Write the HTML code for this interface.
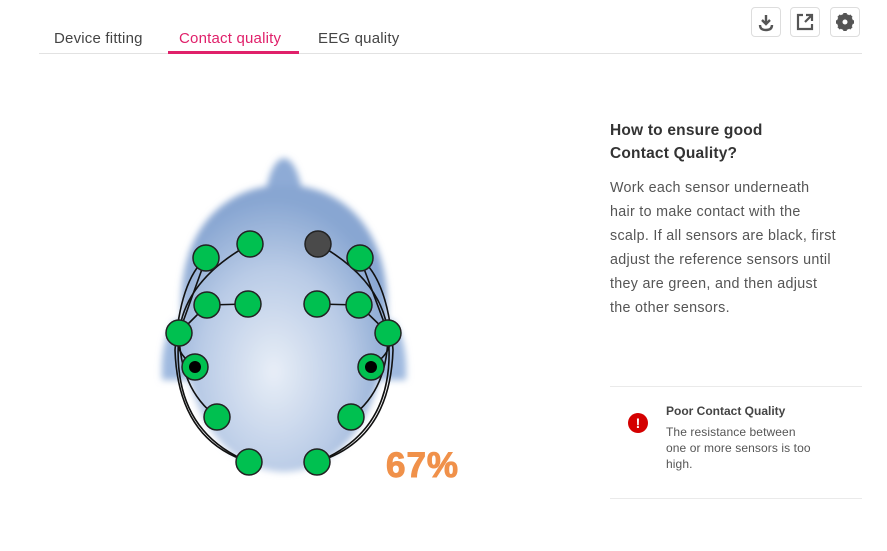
<!DOCTYPE html>
<html><head><meta charset="utf-8"><style>
body{margin:0;width:887px;height:551px;background:#fff;font-family:"Liberation Sans",sans-serif;position:relative;overflow:hidden;color:#555}
.abs{position:absolute;white-space:nowrap}
.tab{position:absolute;top:30px;font-size:15px;color:#444;letter-spacing:0.2px}
.btn{position:absolute;top:7px;width:30px;height:30px;border:1px solid #ddd;border-radius:4px;box-sizing:border-box;background:#fff}
</style></head><body>
<div class="tab" style="left:54px">Device fitting</div>
<div class="tab" style="left:179px;color:#e0206a">Contact quality</div>
<div class="tab" style="left:318px">EEG quality</div>
<div class="abs" style="left:39px;top:53px;width:823px;height:1px;background:#e2e2e2"></div>
<div class="abs" style="left:168px;top:51px;width:131px;height:3px;background:#e0206a"></div>

<div class="btn" style="left:751px"><svg width="28" height="28" viewBox="0 0 28 28"><path d="M14 7v9M10 12l4 4 4-4" stroke="#555" stroke-width="2.4" fill="none"/><path d="M8 17q0 5 6 5t6-5" stroke="#555" stroke-width="2.4" fill="none"/></svg></div>
<div class="btn" style="left:790px"><svg width="28" height="28" viewBox="0 0 28 28"><path d="M12 7H7v14h14v-5" stroke="#555" stroke-width="2.2" fill="none"/><path d="M14 14l7-7M15 7h6v6" stroke="#555" stroke-width="2.2" fill="none"/></svg></div>
<div class="btn" style="left:830px"><svg width="28" height="28" viewBox="0 0 28 28"><circle cx="14" cy="14" r="6" fill="none" stroke="#555" stroke-width="4"/><g stroke="#555" stroke-width="3.5"><path d="M14 5v18M5 14h18M7.6 7.6l12.8 12.8M20.4 7.6L7.6 20.4"/></g><circle cx="14" cy="14" r="2.5" fill="#fff"/></svg></div>

<svg class="abs" style="left:0;top:0" width="600" height="551">
<defs>
<radialGradient id="hg" cx="0.45" cy="0.65" r="0.6"><stop offset="0" stop-color="#e8eef7"/><stop offset="0.6" stop-color="#b9cbe6"/><stop offset="1" stop-color="#88a6d2"/></radialGradient>
<filter id="bl"><feGaussianBlur stdDeviation="3.5"/></filter>
</defs>
<g filter="url(#bl)">
<path d="M266 190 Q272 160 284 158 Q296 160 302 190Z" fill="#8eabd6"/>
<path d="M162 380 Q160 340 175 320 L190 325 L190 380Z" fill="#9fb9df"/>
<path d="M406 380 Q408 340 393 320 L378 325 L378 380Z" fill="#9fb9df"/>
<path d="M284 185 C340 185 385 225 387 300 C390 400 350 470 284 472 C218 470 178 400 181 300 C183 225 228 185 284 185Z" fill="url(#hg)"/>
</g>
<g stroke="#111" stroke-width="1.6" fill="none">
<path d="M249 462 Q170 430 179 333 Q185 280 250 244"/>
<path d="M249 462 Q178 440 175 350 Q180 280 206 258"/>
<path d="M217 417 Q180 390 179 333"/>
<path d="M195 367 Q172 350 179 333 L207 305 L248 304"/>
<path d="M179 333 L206 258"/>
<path d="M317 462 Q398 430 388 333 Q382 280 318 244"/>
<path d="M317 462 Q390 440 393 350 Q388 280 360 258"/>
<path d="M351 417 Q388 390 388 333"/>
<path d="M371 367 Q396 350 388 333 L359 305 L317 304"/>
<path d="M388 333 L360 258"/>
</g>
<g fill="#00c050" stroke="#222" stroke-width="1.5">
<circle cx="250" cy="244" r="13"/><circle cx="206" cy="258" r="13"/><circle cx="207" cy="305" r="13"/><circle cx="248" cy="304" r="13"/><circle cx="179" cy="333" r="13"/><circle cx="195" cy="367" r="13"/><circle cx="217" cy="417" r="13"/><circle cx="249" cy="462" r="13"/>
<circle cx="360" cy="258" r="13"/><circle cx="317" cy="304" r="13"/><circle cx="359" cy="305" r="13"/><circle cx="388" cy="333" r="13"/><circle cx="371" cy="367" r="13"/><circle cx="351" cy="417" r="13"/><circle cx="317" cy="462" r="13"/>
<circle cx="318" cy="244" r="13" fill="#4a4a4a"/>
</g>
<circle cx="195" cy="367" r="6" fill="#000"/><circle cx="371" cy="367" r="6" fill="#000"/>
<text x="386" y="477" font-family="Liberation Sans" font-weight="bold" font-size="35" fill="#f0914a" stroke="#f0914a" stroke-width="1" letter-spacing="1">67%</text>
</svg>

<div class="abs" style="left:610px;top:119px;font-size:15.5px;font-weight:bold;color:#333;line-height:23px;letter-spacing:0.2px">How to ensure good<br>Contact Quality?</div>
<div class="abs" style="left:610px;top:176px;font-size:14.3px;color:#555;line-height:24px;letter-spacing:0.3px">Work each sensor underneath<br>hair to make contact with the<br>scalp. If all sensors are black, first<br>adjust the reference sensors until<br>they are green, and then adjust<br>the other sensors.</div>

<div class="abs" style="left:610px;top:386px;width:252px;height:1px;background:#eaeaea"></div>
<div class="abs" style="left:610px;top:498px;width:252px;height:1px;background:#eaeaea"></div>
<div class="abs" style="left:628px;top:413px;width:20px;height:20px;border-radius:50%;background:#d40000;color:#fff;font-weight:bold;font-size:14px;text-align:center;line-height:20px">!</div>
<div class="abs" style="left:666px;top:404px;font-size:12px;font-weight:bold;color:#444">Poor Contact Quality</div>
<div class="abs" style="left:666px;top:424px;font-size:12px;color:#555;line-height:16px;letter-spacing:0.1px">The resistance between<br>one or more sensors is too<br>high.</div>
</body></html>
